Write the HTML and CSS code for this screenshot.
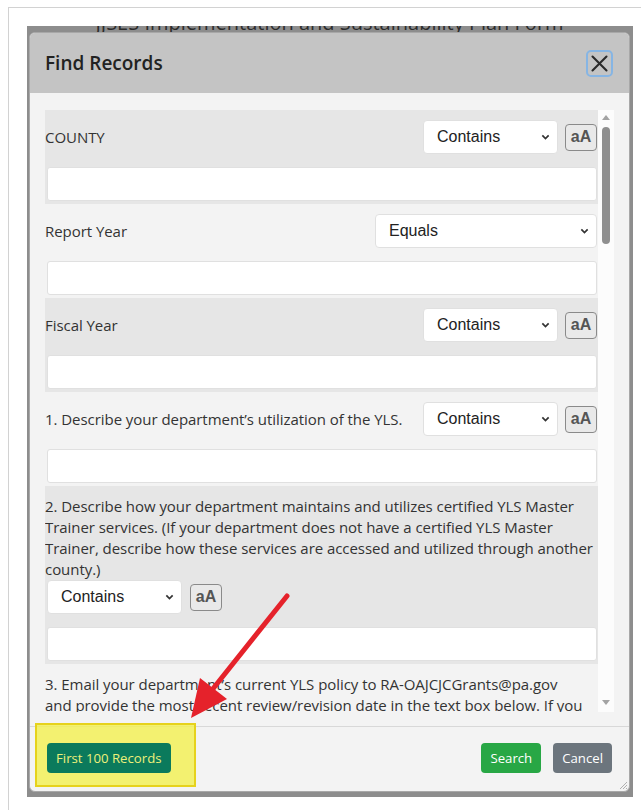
FILE: index.html
```html
<!DOCTYPE html>
<html lang="en">
<head>
<meta charset="utf-8">
<title>Find Records</title>
<link rel="stylesheet" href="styles.css">
</head>
<body>
<div class="window">
  <div class="backdrop">
    <h1 class="page-title">JJSES Implementation and Sustainability Plan Form</h1>

    <div class="modal">
      <div class="modal-header">
        <h2 class="modal-title">Find Records</h2>
        <button class="close-btn" type="button" aria-label="Close">
          <svg width="17" height="17" viewBox="0 0 17 17"><path d="M1.5 1.5l14 14M15.5 1.5l-14 14" stroke="#2a2a2a" stroke-width="2.1" stroke-linecap="round" fill="none"/></svg>
        </button>
      </div>

      <div class="modal-body">
        <div class="scroll-area">
          <div class="fields">

            <div class="field shaded">
              <div class="field-head">
                <span class="field-label">COUNTY</span>
                <div class="ops">
                  <div class="select narrow"><span>Contains</span><svg class="chev" viewBox="0 0 10 6"><path d="M1.5 1.2l3.5 3.5 3.5-3.5"/></svg></div>
                  <button class="case-btn" type="button">aA</button>
                </div>
              </div>
              <input class="text-input" type="text">
            </div>

            <div class="field">
              <div class="field-head">
                <span class="field-label">Report Year</span>
                <div class="ops">
                  <div class="select wide"><span>Equals</span><svg class="chev" viewBox="0 0 10 6"><path d="M1.5 1.2l3.5 3.5 3.5-3.5"/></svg></div>
                </div>
              </div>
              <input class="text-input" type="text">
            </div>

            <div class="field shaded">
              <div class="field-head">
                <span class="field-label">Fiscal Year</span>
                <div class="ops">
                  <div class="select narrow"><span>Contains</span><svg class="chev" viewBox="0 0 10 6"><path d="M1.5 1.2l3.5 3.5 3.5-3.5"/></svg></div>
                  <button class="case-btn" type="button">aA</button>
                </div>
              </div>
              <input class="text-input" type="text">
            </div>

            <div class="field">
              <div class="field-head">
                <span class="field-label">1. Describe your department’s utilization of the YLS.</span>
                <div class="ops">
                  <div class="select narrow"><span>Contains</span><svg class="chev" viewBox="0 0 10 6"><path d="M1.5 1.2l3.5 3.5 3.5-3.5"/></svg></div>
                  <button class="case-btn" type="button">aA</button>
                </div>
              </div>
              <input class="text-input" type="text">
            </div>

            <div class="field shaded">
              <p class="field-text">2. Describe how your department maintains and utilizes certified YLS Master Trainer services. (If your department does not have a certified YLS Master Trainer, describe how these services are accessed and utilized through another county.)</p>
              <div class="ops stacked">
                <div class="select narrow"><span>Contains</span><svg class="chev" viewBox="0 0 10 6"><path d="M1.5 1.2l3.5 3.5 3.5-3.5"/></svg></div>
                <button class="case-btn" type="button">aA</button>
              </div>
              <input class="text-input" type="text">
            </div>

            <div class="field">
              <p class="field-text">3. Email your department’s current YLS policy to RA-OAJCJCGrants@pa.gov<br>and provide the most recent review/revision date in the text box below. If you do not have a current YLS policy, please indicate that in the text box.</p>
              <div class="ops stacked">
                <div class="select narrow"><span>Contains</span><svg class="chev" viewBox="0 0 10 6"><path d="M1.5 1.2l3.5 3.5 3.5-3.5"/></svg></div>
                <button class="case-btn" type="button">aA</button>
              </div>
              <input class="text-input" type="text">
            </div>

          </div>

          <div class="scrollbar">
            <svg class="sb-arrow" viewBox="0 0 8 5"><path d="M4 0L8 5H0z"/></svg>
            <div class="sb-thumb"></div>
            <svg class="sb-arrow down" viewBox="0 0 8 5"><path d="M0 0H8L4 5z"/></svg>
          </div>
        </div>
      </div>

      <div class="modal-footer">
        <button class="btn btn-teal" type="button">First 100 Records</button>
        <div class="footer-actions">
          <button class="btn btn-green" type="button">Search</button>
          <button class="btn btn-gray" type="button">Cancel</button>
        </div>
      </div>

      <svg class="resize-grip" viewBox="0 0 10 10"><path d="M9 2L2 9M9 5L5 9M9 8L8 9"/></svg>
    </div>
  </div>
</div>

<!-- annotation: highlight box and pointer arrow -->
<div class="highlight"></div>
<svg class="callout" viewBox="0 0 641 810" width="641" height="810">
  <line x1="287" y1="596" x2="212" y2="690" stroke="#e5222b" stroke-width="5" stroke-linecap="round"/>
  <polygon points="191,718 227,699 200,678" fill="#e5222b"/>
</svg>
</body>
</html>
```

FILE: styles.css
```css
* {
  box-sizing: border-box;
}

html,
body {
  margin: 0;
  background: #ffffff;
}

body {
  position: relative;
  width: 641px;
  height: 810px;
  overflow: hidden;
  font-family: "Open Sans", "Noto Sans", sans-serif;
}

/* outer browser-like frame */
.window {
  margin: 7px 0 0 8px;
  height: 803px;
  border-top: 1px solid #d2d2d2;
  border-left: 1px solid #d2d2d2;
  padding: 18px 0 0 18px;
}

/* dimmed page behind the dialog */
.backdrop {
  width: 606px;
  height: 771px;
  padding: 0 3px 0 2px;
  background: #8d8d8d;
  overflow: hidden;
}

.page-title {
  margin: -13px 0 0;
  height: 19px;
  line-height: 19px;
  font-size: 20px;
  font-weight: 400;
  text-align: center;
  color: #2c2c2c;
  white-space: nowrap;
}

/* dialog */
.modal {
  position: relative;
  height: 760px;
  display: flex;
  flex-direction: column;
  background: #f3f3f3;
  border: 1px solid #a8a8a8;
  border-radius: 6px;
  overflow: hidden;
}

.modal-header {
  height: 60px;
  display: flex;
  align-items: center;
  justify-content: space-between;
  padding: 0 16px 0 15px;
  background: #c4c4c4;
}

.modal-title {
  margin: 0;
  font-size: 19px;
  font-weight: 600;
  color: #222;
}

.close-btn {
  width: 27px;
  height: 27px;
  padding: 0;
  display: flex;
  align-items: center;
  justify-content: center;
  background: transparent;
  border: 2px solid #86b5e4;
  border-radius: 5px;
}

.modal-body {
  padding: 17px 15px 14px 15px;
}

.scroll-area {
  display: flex;
  height: 602px;
}

.fields {
  flex: 1;
  overflow: hidden;
}

.field {
  padding: 10px 0 3px;
  background: #f3f3f3;
}

.field.shaded {
  background: #e6e6e6;
}

.field-head {
  height: 34px;
  margin-bottom: 13px;
  display: flex;
  align-items: center;
  justify-content: space-between;
}

.field-label,
.field-text {
  font-size: 15px;
  letter-spacing: -0.05px;
  color: #333;
}

.field-text {
  margin: 0;
  line-height: 21px;
}

.ops {
  display: flex;
  align-items: center;
  gap: 7px;
  margin-right: 1px;
}

.ops.stacked {
  height: 34px;
  margin: 0 0 13px 2px;
  gap: 8px;
}

.select {
  height: 34px;
  display: flex;
  align-items: center;
  justify-content: space-between;
  padding: 0 7px 0 13px;
  background: #fff;
  border: 1px solid #e0e0e0;
  border-radius: 4px;
  font-family: "Liberation Sans", Arial, sans-serif;
  font-size: 16px;
  color: #222;
}

.select.narrow {
  width: 135px;
}

.select.wide {
  width: 222px;
}

.chev {
  width: 9px;
  height: 6px;
}

.chev path {
  fill: none;
  stroke: #333;
  stroke-width: 1.9;
}

.case-btn {
  width: 32px;
  height: 27px;
  padding: 0;
  background: #e9e9e9;
  border: 1px solid #8a8a8a;
  border-radius: 4px;
  font-family: "Liberation Sans", Arial, sans-serif;
  font-weight: 700;
  font-size: 16px;
  color: #555;
}

.text-input {
  display: block;
  width: 550px;
  height: 34px;
  margin: 0 1px 0 2px;
  background: #fff;
  border: 1px solid #e0e0e0;
  border-radius: 3px;
}

/* drawn scrollbar */
.scrollbar {
  width: 16px;
  display: flex;
  flex-direction: column;
  align-items: center;
  background: #fcfcfc;
}

.sb-arrow {
  width: 8px;
  height: 5px;
  margin-top: 5px;
  fill: #a3a3a3;
}

.sb-arrow.down {
  margin: auto 0 7px;
}

.sb-thumb {
  width: 8px;
  height: 117px;
  margin-top: 7px;
  border-radius: 4px;
  background: #8f8f8f;
}

.modal-footer {
  flex: 1;
  display: flex;
  align-items: flex-start;
  justify-content: space-between;
  padding: 16px 17px 0;
  border-top: 1px solid #d8d8d8;
}

.footer-actions {
  display: flex;
  gap: 12px;
}

.btn {
  height: 30px;
  padding: 0 9px;
  border: 0;
  border-radius: 4px;
  font-family: "Open Sans", "Noto Sans", sans-serif;
  font-size: 13.2px;
  color: #fff;
}

.btn-teal {
  position: relative;
  z-index: 2;
  background: #0b7a5c;
  color: #eef07a;
}

.btn-green {
  background: #28a745;
}

.btn-gray {
  background: #6c757d;
}

.resize-grip {
  position: absolute;
  right: 1px;
  bottom: 1px;
  width: 10px;
  height: 10px;
}

.resize-grip path {
  stroke: #b0b0b0;
  stroke-width: 1;
  fill: none;
}

/* annotation overlay */
.highlight {
  position: absolute;
  left: 35px;
  top: 723px;
  width: 161px;
  height: 64px;
  z-index: 1;
  background: rgba(242, 240, 88, 0.85);
  border: 2px solid #e6d21c;
}

.callout {
  position: absolute;
  left: 0;
  top: 0;
  z-index: 3;
  pointer-events: none;
}
```
